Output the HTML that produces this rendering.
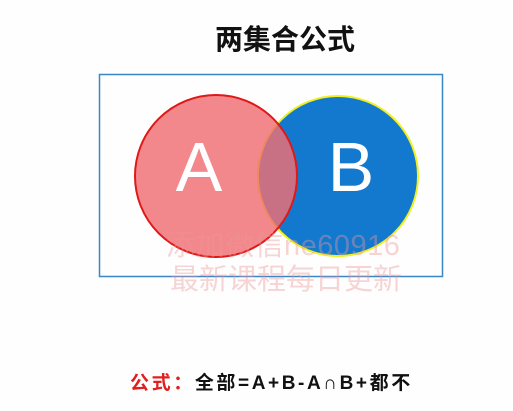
<!DOCTYPE html>
<html><head><meta charset="utf-8"><style>
body{margin:0;width:513px;height:411px;background:#fefefe;position:relative;overflow:hidden;font-family:"Liberation Sans","Noto Sans CJK SC",sans-serif}
.t{position:absolute;left:0;width:570px;text-align:center;top:18px;font-size:28px;font-weight:bold;color:#111}
.f{position:absolute;left:130px;top:368px;font-size:19px;font-weight:bold;color:#111;white-space:nowrap;letter-spacing:2.6px}
.f span{color:#e02020}
.w{position:absolute;font-size:29px;color:rgba(235,150,150,0.4);white-space:nowrap}
</style></head><body>
<div class="t">两集合公式</div>
<svg width="513" height="411" style="position:absolute;left:0;top:0">
<rect x="99.5" y="74.5" width="343" height="202" fill="none" stroke="#3a86c8" stroke-width="1.5"/>
<circle cx="338" cy="176" r="80" fill="#1279cf" stroke="#f0f020" stroke-width="2"/>
<circle cx="216" cy="176" r="81" fill="rgba(240,110,115,0.82)" stroke="#e01818" stroke-width="2"/>
<text x="199" y="191" font-size="70" fill="#fff" text-anchor="middle" font-family="Liberation Sans">A</text>
<text x="351" y="191" font-size="70" fill="#fff" text-anchor="middle" font-family="Liberation Sans">B</text>
</svg>
<div class="w" style="left:166px;top:222px;letter-spacing:0.5px">添加微信ne60916</div>
<div class="w" style="left:170px;top:256px">最新课程每日更新</div>
<div class="f"><span>公式：</span>全部=A+B-A∩B+都不</div>
</body></html>
